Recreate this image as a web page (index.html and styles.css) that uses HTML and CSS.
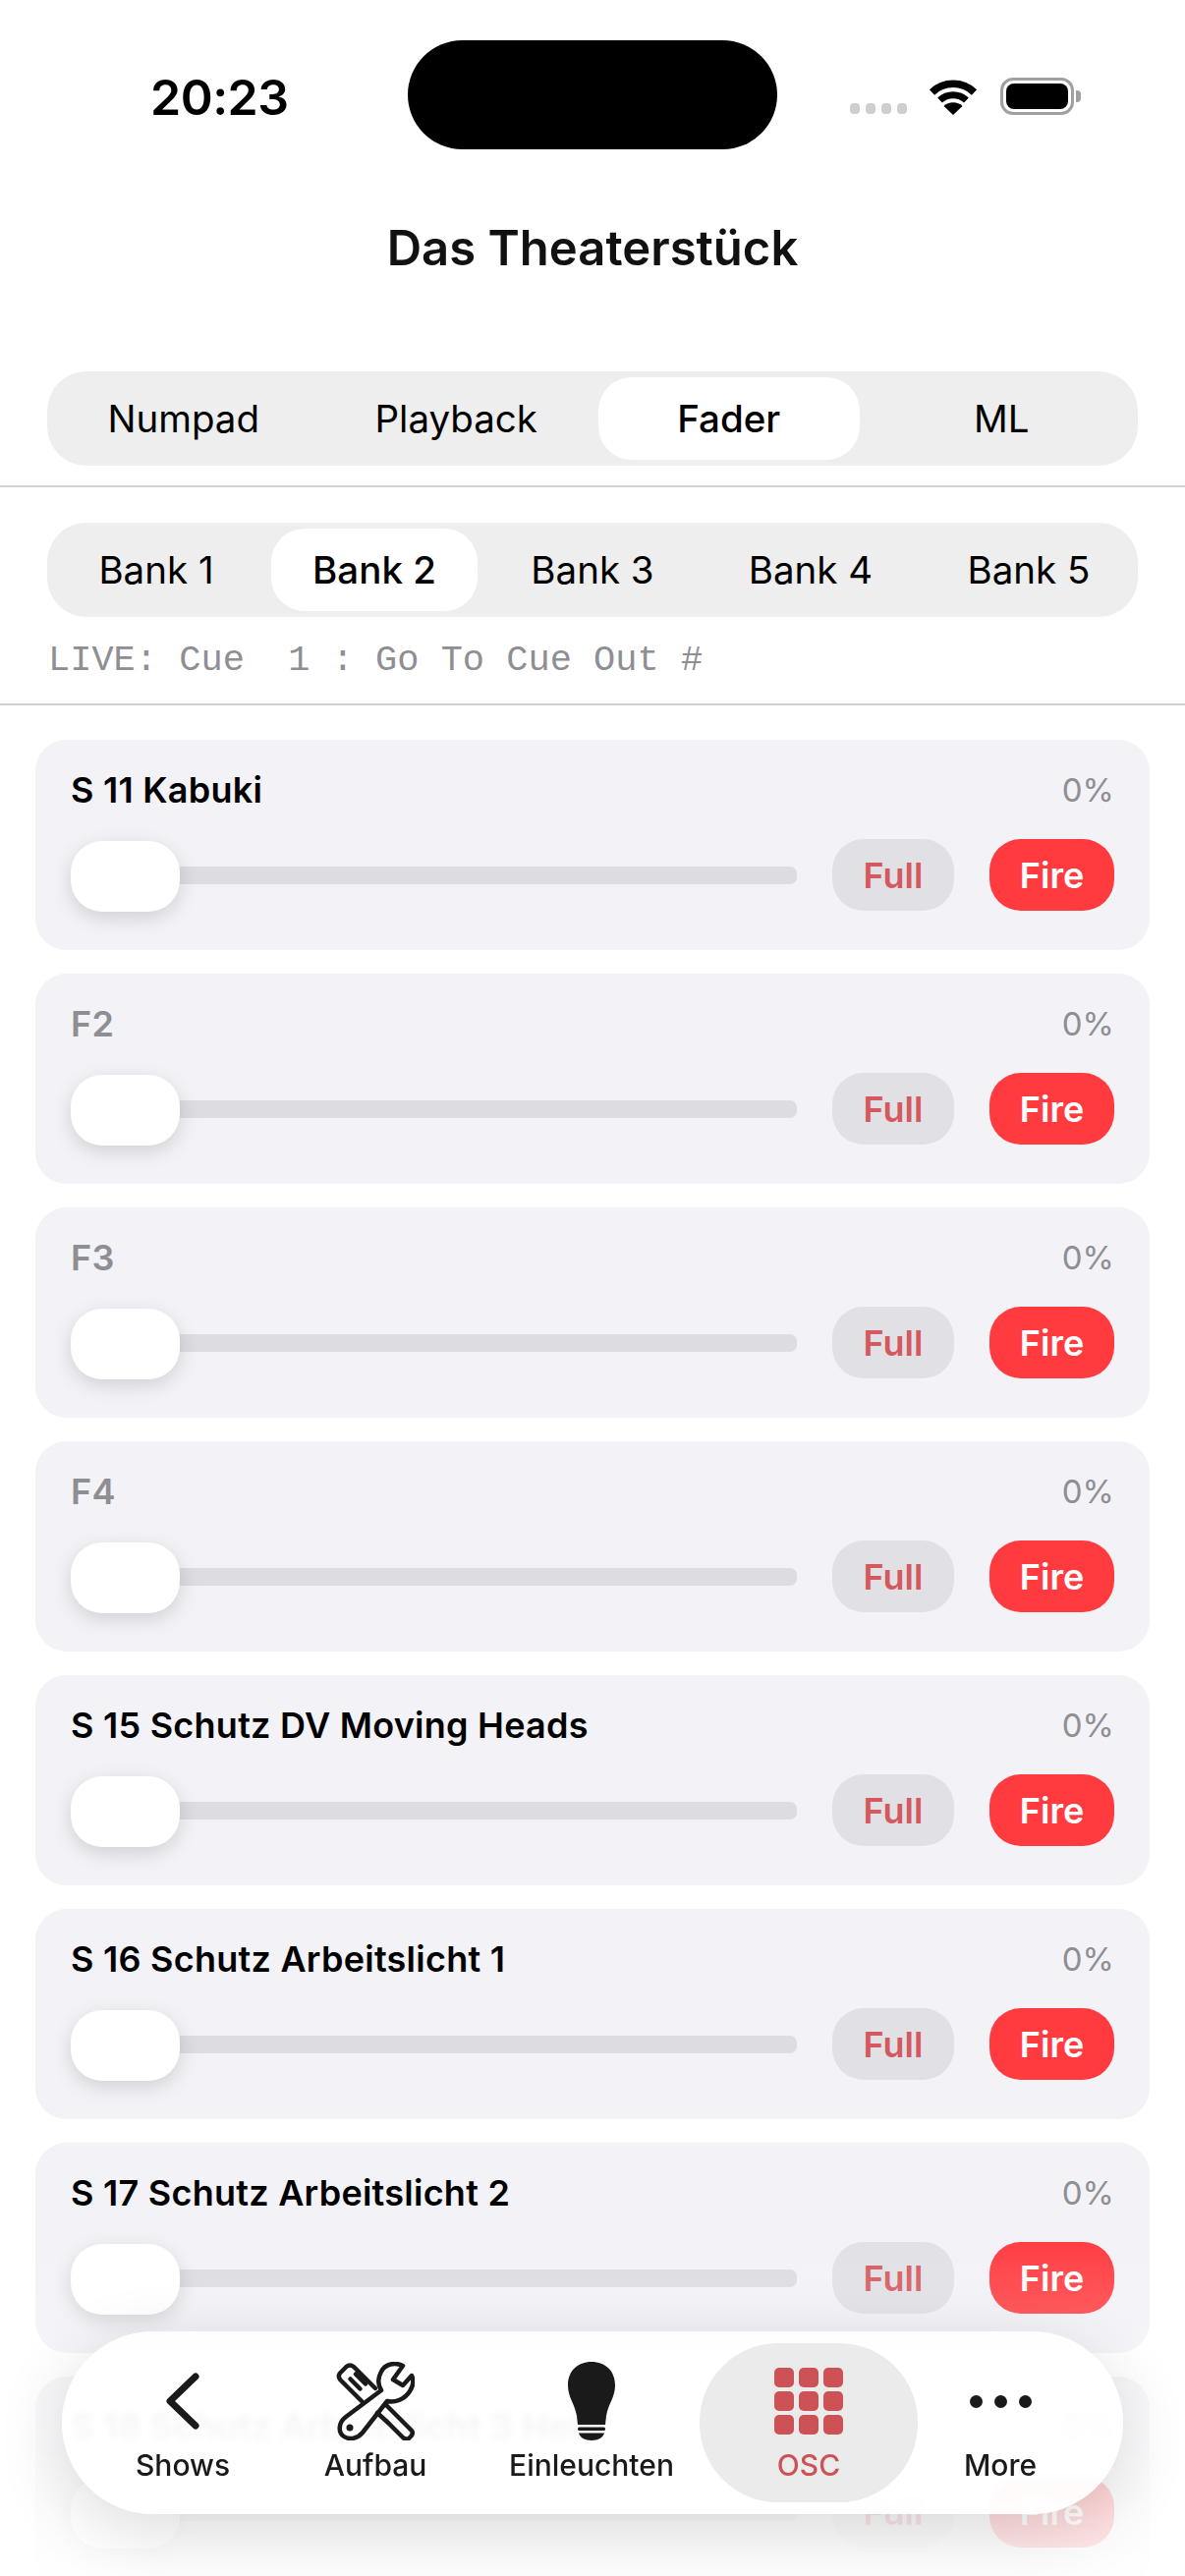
FILE: index.html
```html
<!DOCTYPE html>
<html lang="de">
<head>
    <meta charset="UTF-8">
    <meta name="viewport" content="width=device-width, initial-scale=1.0">
    <title>Das Theaterstück</title>
    <link rel="stylesheet" href="styles.css">
</head>
<body>
    <div class="page">
        <div class="status-bar">
            <div class="status-time">20:23</div>
            <div class="island"></div>
            <div class="status-icons">
                <div class="signal"><span></span><span></span><span></span><span></span></div>
                <svg class="wifi" viewBox="0 0 50 37">
                    <path d="M3.500 14 A31 31 0 0 1 46.500 14" fill="none" stroke="#000" stroke-width="7.500"/>
                    <path d="M11.500 22 A20 20 0 0 1 38.500 22" fill="none" stroke="#000" stroke-width="7"/>
                    <path d="M25 37 L15.500 28 A14 14 0 0 1 34.500 28 Z" fill="#000"/>
                </svg>
                <div class="battery"><div class="battery-fill"></div></div>
                <div class="battery-nub"></div>
            </div>
        </div>

        <h1 class="title">Das Theaterstück</h1>

        <div class="segments segments-top">
            <div class="segment">Numpad</div>
            <div class="segment">Playback</div>
            <div class="segment active">Fader</div>
            <div class="segment">ML</div>
        </div>
        <div class="divider divider-top"></div>

        <div class="segments segments-bank">
            <div class="segment">Bank 1</div>
            <div class="segment active">Bank 2</div>
            <div class="segment">Bank 3</div>
            <div class="segment">Bank 4</div>
            <div class="segment">Bank 5</div>
        </div>
        <div class="live-line">LIVE: Cue  1 : Go To Cue Out #</div>
        <div class="divider"></div>

        <div class="faders">
            <div class="fader">
                <div class="fader-head"><span class="fader-name">S 11 Kabuki</span><span class="fader-value">0%</span></div>
                <div class="fader-row">
                    <div class="slider"><div class="slider-track"></div><div class="slider-thumb"></div></div>
                    <div class="btn btn-full">Full</div>
                    <div class="btn btn-fire">Fire</div>
                </div>
            </div>
            <div class="fader">
                <div class="fader-head"><span class="fader-name empty">F2</span><span class="fader-value">0%</span></div>
                <div class="fader-row">
                    <div class="slider"><div class="slider-track"></div><div class="slider-thumb"></div></div>
                    <div class="btn btn-full">Full</div>
                    <div class="btn btn-fire">Fire</div>
                </div>
            </div>
            <div class="fader">
                <div class="fader-head"><span class="fader-name empty">F3</span><span class="fader-value">0%</span></div>
                <div class="fader-row">
                    <div class="slider"><div class="slider-track"></div><div class="slider-thumb"></div></div>
                    <div class="btn btn-full">Full</div>
                    <div class="btn btn-fire">Fire</div>
                </div>
            </div>
            <div class="fader">
                <div class="fader-head"><span class="fader-name empty">F4</span><span class="fader-value">0%</span></div>
                <div class="fader-row">
                    <div class="slider"><div class="slider-track"></div><div class="slider-thumb"></div></div>
                    <div class="btn btn-full">Full</div>
                    <div class="btn btn-fire">Fire</div>
                </div>
            </div>
            <div class="fader">
                <div class="fader-head"><span class="fader-name">S 15 Schutz DV Moving Heads</span><span class="fader-value">0%</span></div>
                <div class="fader-row">
                    <div class="slider"><div class="slider-track"></div><div class="slider-thumb"></div></div>
                    <div class="btn btn-full">Full</div>
                    <div class="btn btn-fire">Fire</div>
                </div>
            </div>
            <div class="fader">
                <div class="fader-head"><span class="fader-name">S 16 Schutz Arbeitslicht 1</span><span class="fader-value">0%</span></div>
                <div class="fader-row">
                    <div class="slider"><div class="slider-track"></div><div class="slider-thumb"></div></div>
                    <div class="btn btn-full">Full</div>
                    <div class="btn btn-fire">Fire</div>
                </div>
            </div>
            <div class="fader">
                <div class="fader-head"><span class="fader-name">S 17 Schutz Arbeitslicht 2</span><span class="fader-value">0%</span></div>
                <div class="fader-row">
                    <div class="slider"><div class="slider-track"></div><div class="slider-thumb"></div></div>
                    <div class="btn btn-full">Full</div>
                    <div class="btn btn-fire">Fire</div>
                </div>
            </div>
            <div class="fader">
                <div class="fader-head"><span class="fader-name">S 18 Schutz Arbeitslicht 3 Hell</span><span class="fader-value">0%</span></div>
                <div class="fader-row">
                    <div class="slider"><div class="slider-track"></div><div class="slider-thumb"></div></div>
                    <div class="btn btn-full">Full</div>
                    <div class="btn btn-fire">Fire</div>
                </div>
            </div>
        </div>

        <div class="bottom-fade"></div>

        <nav class="tabbar">
            <div class="tab">
                <div class="tab-icon">
                    <svg width="34" height="58" viewBox="0 0 34 58">
                        <path d="M30 4 L4 29 L30 54" fill="none" stroke="#1a1a1a" stroke-width="7" stroke-linecap="round" stroke-linejoin="round"/>
                    </svg>
                </div>
                <span class="tab-label">Shows</span>
            </div>
            <div class="tab">
                <div class="tab-icon">
                    <svg width="80" height="80" viewBox="0 0 80 80" fill="none" stroke="#1a1a1a" stroke-width="4.500" stroke-linecap="round" stroke-linejoin="round">
                        <path d="M40 27 L18 5 Q14 2 10.500 5 L4 11.500 Q1.500 15 4.500 18.500 L26 40"/>
                        <path d="M14.500 17.500 L24.500 27.500 M20 12.500 L30 22.500"/>
                        <path d="M51 44 L63 56 L77 70 Q79 73 76 76 L74 78 Q71 79.500 68 77 L53 62 L42 52"/>
                        <path d="M68 4 C60 0 50 2 46 10 C42 17 43 24 46 29 L10 56 C2 62 2 72 8 76 C14 80 22 78 27 72 L52 40 C60 42 70 38 75 30 C79 24 79 18 77 14 L68 24 L58 18 Z"/>
                        <circle cx="14" cy="67" r="3.500" fill="#1a1a1a" stroke="none"/>
                    </svg>
                </div>
                <span class="tab-label">Aufbau</span>
            </div>
            <div class="tab">
                <div class="tab-icon">
                    <svg width="48" height="80" viewBox="0 0 48 80" fill="#1a1a1a">
                        <path d="M24 0 C10 0 0 9 0 24 C0 36 7 43 9 55 L10 64 L38 64 L39 55 C41 43 48 36 48 24 C48 9 38 0 24 0 Z"/>
                        <rect x="10" y="66.500" width="28" height="3.500" rx="1.500"/>
                        <path d="M11 72.500 L37 72.500 C36 77 31 80 24 80 C17 80 12 77 11 72.500 Z"/>
                    </svg>
                </div>
                <span class="tab-label">Einleuchten</span>
            </div>
            <div class="tab active">
                <div class="tab-icon">
                    <div class="grid-icon">
                        <span></span><span></span><span></span>
                        <span></span><span></span><span></span>
                        <span></span><span></span><span></span>
                    </div>
                </div>
                <span class="tab-label">OSC</span>
            </div>
            <div class="tab">
                <div class="tab-icon">
                    <div class="more-icon"><span></span><span></span><span></span></div>
                </div>
                <span class="tab-label">More</span>
            </div>
        </nav>
    </div>
</body>
</html>
```

FILE: styles.css
```css
* {
    box-sizing: border-box;
}
body {
    margin: 0;
    background-color: #fff;
    font-family: 'Inter', 'Roboto', sans-serif;
    color: #000;
}
.page {
    position: relative;
    width: 1206px;
    height: 2622px;
    overflow: hidden;
    background: #fff;
}

/* status bar */
.status-bar {
    display: flex;
    align-items: center;
    height: 111px;
    margin-top: 41px;
    padding-left: 153px;
}
.status-time {
    width: 262px;
    font-size: 50px;
    font-weight: 600;
    line-height: 1;
    letter-spacing: -0.5px;
    padding-top: 4px;
}
.island {
    width: 376px;
    height: 111px;
    background: #000;
    border-radius: 56px;
}
.status-icons {
    display: flex;
    align-items: flex-end;
    margin-left: 74px;
    height: 38px;
    margin-top: 3px;
}
.signal {
    display: flex;
    gap: 6px;
    margin-bottom: 0;
    padding-bottom: 1px;
}
.signal span {
    width: 10px;
    height: 11px;
    border-radius: 4px;
    background: #cfcfcf;
}
.wifi {
    width: 50px;
    height: 37px;
    margin-left: 22px;
}
.battery {
    width: 75px;
    height: 38px;
    margin-left: 23px;
    padding: 3px;
    border: 3px solid #a0a0a0;
    border-radius: 13px;
}
.battery-fill {
    width: 100%;
    height: 100%;
    background: #000;
    border-radius: 8px;
}
.battery-nub {
    width: 5px;
    height: 12px;
    margin: 0 0 13px 2px;
    background: #a0a0a0;
    border-radius: 0 4px 4px 0;
}

.title {
    margin: 76px 0 0;
    height: 50px;
    font-size: 49px;
    line-height: 50px;
    font-weight: 600;
    text-align: center;
    color: #111;
}

/* segmented controls */
.segments {
    display: grid;
    height: 96px;
    margin: 0 48px;
    padding: 6px 0;
    background: #eee;
    border-radius: 40px;
}
.segments-top {
    grid-template-columns: repeat(4, 1fr);
    margin-top: 100px;
}
.segments-bank {
    grid-template-columns: repeat(5, 1fr);
    margin-top: 36px;
}
.segment {
    display: flex;
    align-items: center;
    justify-content: center;
    margin: 0 6px;
    font-size: 38.500px;
    border-radius: 34px;
}
.segment.active {
    background: #fff;
    font-weight: 500;
}
.divider {
    height: 2px;
    background: #d0d0d2;
}
.divider-top {
    margin-top: 20px;
}
.live-line {
    height: 88px;
    padding: 23px 0 0 49px;
    font-family: 'Liberation Mono', monospace;
    font-size: 37px;
    line-height: 42px;
    color: #8e8e93;
    white-space: pre;
}

/* fader cards */
.faders {
    display: flex;
    flex-direction: column;
    gap: 24px;
    padding: 35px 36px 0;
}
.fader {
    flex: none;
    height: 214px;
    padding: 29px 36px 0;
    background: #f2f2f7;
    border-radius: 32px;
}
.fader-head {
    display: flex;
    justify-content: space-between;
    align-items: center;
    height: 44px;
}
.fader-name {
    font-size: 36px;
    font-weight: 600;
    letter-spacing: 0.25px;
}
.fader-name.empty {
    color: #8e8e93;
}
.fader-value {
    font-size: 33px;
    color: #8e8e93;
}
.fader-row {
    display: flex;
    align-items: center;
    margin-top: 28px;
}
.slider {
    position: relative;
    display: flex;
    align-items: center;
    width: 739px;
    height: 73px;
}
.slider-track {
    width: 100%;
    height: 18px;
    background: #dcdce1;
    border-radius: 7px;
}
.slider-thumb {
    position: absolute;
    left: 0;
    top: 2px;
    width: 111px;
    height: 72px;
    background: #fff;
    border-radius: 32px;
    box-shadow: 0 6px 20px rgba(0, 0, 0, 0.14);
}
.btn {
    display: flex;
    align-items: center;
    justify-content: center;
    height: 73px;
    border-radius: 32px;
    font-size: 36px;
    font-weight: 600;
}
.btn-full {
    width: 124px;
    margin-left: 36px;
    background: #e0e0e5;
    color: #d5585f;
}
.btn-fire {
    width: 127px;
    margin-left: 36px;
    background: #ff3b40;
    color: #fff;
}

/* white fade behind the tab bar */
.bottom-fade {
    position: absolute;
    left: 0;
    right: 0;
    bottom: 0;
    height: 350px;
    background: linear-gradient(to bottom, rgba(255, 255, 255, 0), rgba(255, 255, 255, 0.2) 30%, rgba(255, 255, 255, 0.7) 60%, rgba(255, 255, 255, 0.92));
}

/* floating tab bar */
.tabbar {
    position: absolute;
    left: 63px;
    top: 2373px;
    width: 1080px;
    height: 186px;
    display: grid;
    grid-template-columns: 172px 220px 220px 222px 168px;
    padding: 12px 41px 12px 37px;
    background: rgba(255, 255, 255, 0.9);
    backdrop-filter: blur(3px);
    border-radius: 93px;
    box-shadow: 0 16px 70px rgba(0, 0, 0, 0.14);
}
.tab {
    display: flex;
    flex-direction: column;
    align-items: center;
    padding-top: 19px;
    color: #1a1a1a;
    border-radius: 80px;
}
.tab.active {
    background: #ebebeb;
    color: #cd5255;
}
.tab-icon {
    display: flex;
    align-items: center;
    justify-content: center;
    height: 80px;
}
.tab-label {
    margin-top: 7px;
    font-size: 30px;
    font-weight: 500;
    line-height: 36px;
}
.grid-icon {
    display: grid;
    grid-template-columns: repeat(3, 20px);
    grid-auto-rows: 20px;
    gap: 4px 5px;
}
.grid-icon span {
    background: #cd5255;
    border-radius: 5px;
}
.more-icon {
    display: flex;
    gap: 12px;
}
.more-icon span {
    width: 13px;
    height: 13px;
    border-radius: 50%;
    background: #1a1a1a;
}
```
